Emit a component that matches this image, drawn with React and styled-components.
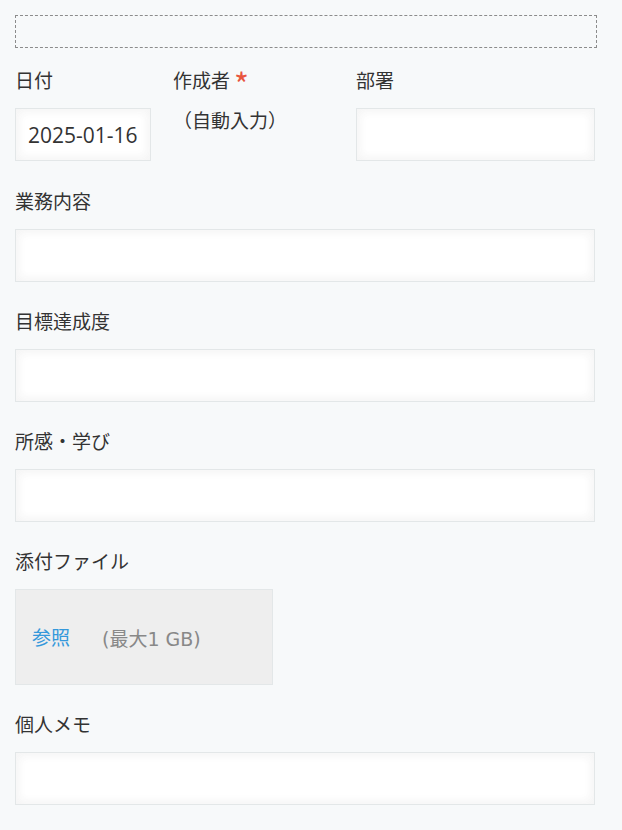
import React from "react";
import styled, { createGlobalStyle } from "styled-components";

const GlobalStyle = createGlobalStyle`
  html, body {
    margin: 0;
    padding: 0;
    background-color: #f7f9fa;
  }
  * {
    box-sizing: border-box;
  }
`;

const App = () => {
  return (
    <Page>
      <GlobalStyle />
      <SpaceBox />
      <FieldRow>
        <Field width="158px">
          <Label>日付</Label>
          <DateInput type="text" defaultValue="2025-01-16" readOnly />
        </Field>
        <Field width="183px">
          <Label>
            作成者<Required>*</Required>
          </Label>
          <AutoValue>（自動入力）</AutoValue>
        </Field>
        <Field width="239px">
          <Label>部署</Label>
          <TextInput type="text" />
        </Field>
      </FieldRow>

      <Field>
        <Label>業務内容</Label>
        <TextInput type="text" />
      </Field>

      <Field>
        <Label>目標達成度</Label>
        <TextInput type="text" />
      </Field>

      <Field>
        <Label>所感・学び</Label>
        <TextInput type="text" />
      </Field>

      <Field>
        <Label>添付ファイル</Label>
        <FileBox>
          <BrowseLink>参照</BrowseLink>
          <FileLimit>(最大1 GB)</FileLimit>
        </FileBox>
      </Field>

      <Field>
        <Label>個人メモ</Label>
        <TextInput type="text" />
      </Field>
    </Page>
  );
};

export default App;

const Page = styled.div`
  padding: 15px 0 0 15px;
  width: 622px;
  min-height: 830px;
  font-family: "Open Sans", "Noto Sans CJK JP", sans-serif;
  font-size: 19px;
  color: #333;
`;

const SpaceBox = styled.div`
  width: 582px;
  height: 33px;
  border: 1px dashed #8c8c8c;
  margin-bottom: 18px;
`;

const FieldRow = styled.div`
  display: flex;
  padding-bottom: 1px;
`;

const Field = styled.div`
  width: ${(p) => p.width || "580px"};
  margin-bottom: 25px;
`;

const Label = styled.div`
  height: 30px;
  line-height: 30px;
  margin-bottom: 12px;
  white-space: nowrap;
`;

const Required = styled.span`
  color: #e8553e;
  font-family: "Noto Sans CJK JP", sans-serif;
  font-size: 32px;
  line-height: 0;
  margin-left: 4px;
  position: relative;
  top: 9px;
`;

const inputBase = `
  display: block;
  height: 53px;
  border: 1px solid #e3e7e8;
  background-color: #fff;
  box-shadow: 1px 1px 12px #f5f5f5 inset, -1px -1px 12px #f5f5f5 inset;
  font-family: "Open Sans", "Noto Sans CJK JP", sans-serif;
  color: #333;
  outline: none;
`;

const TextInput = styled.input`
  ${inputBase}
  width: 100%;
  padding: 0 13px;
  font-size: 19px;
`;

const DateInput = styled.input`
  ${inputBase}
  width: 136px;
  padding: 0 12px;
  font-size: 21px;
`;

const AutoValue = styled.div`
  line-height: 30px;
  margin-top: -2px;
`;

const FileBox = styled.div`
  width: 258px;
  height: 96px;
  display: flex;
  align-items: center;
  padding-left: 16px;
  background-color: #eeeeee;
  border: 1px solid #e3e7e8;
`;

const BrowseLink = styled.span`
  color: #3498db;
  cursor: pointer;
`;

const FileLimit = styled.span`
  font-family: "DejaVu Sans", "Noto Sans CJK JP", sans-serif;
  color: #888;
  margin-left: 32px;
`;
